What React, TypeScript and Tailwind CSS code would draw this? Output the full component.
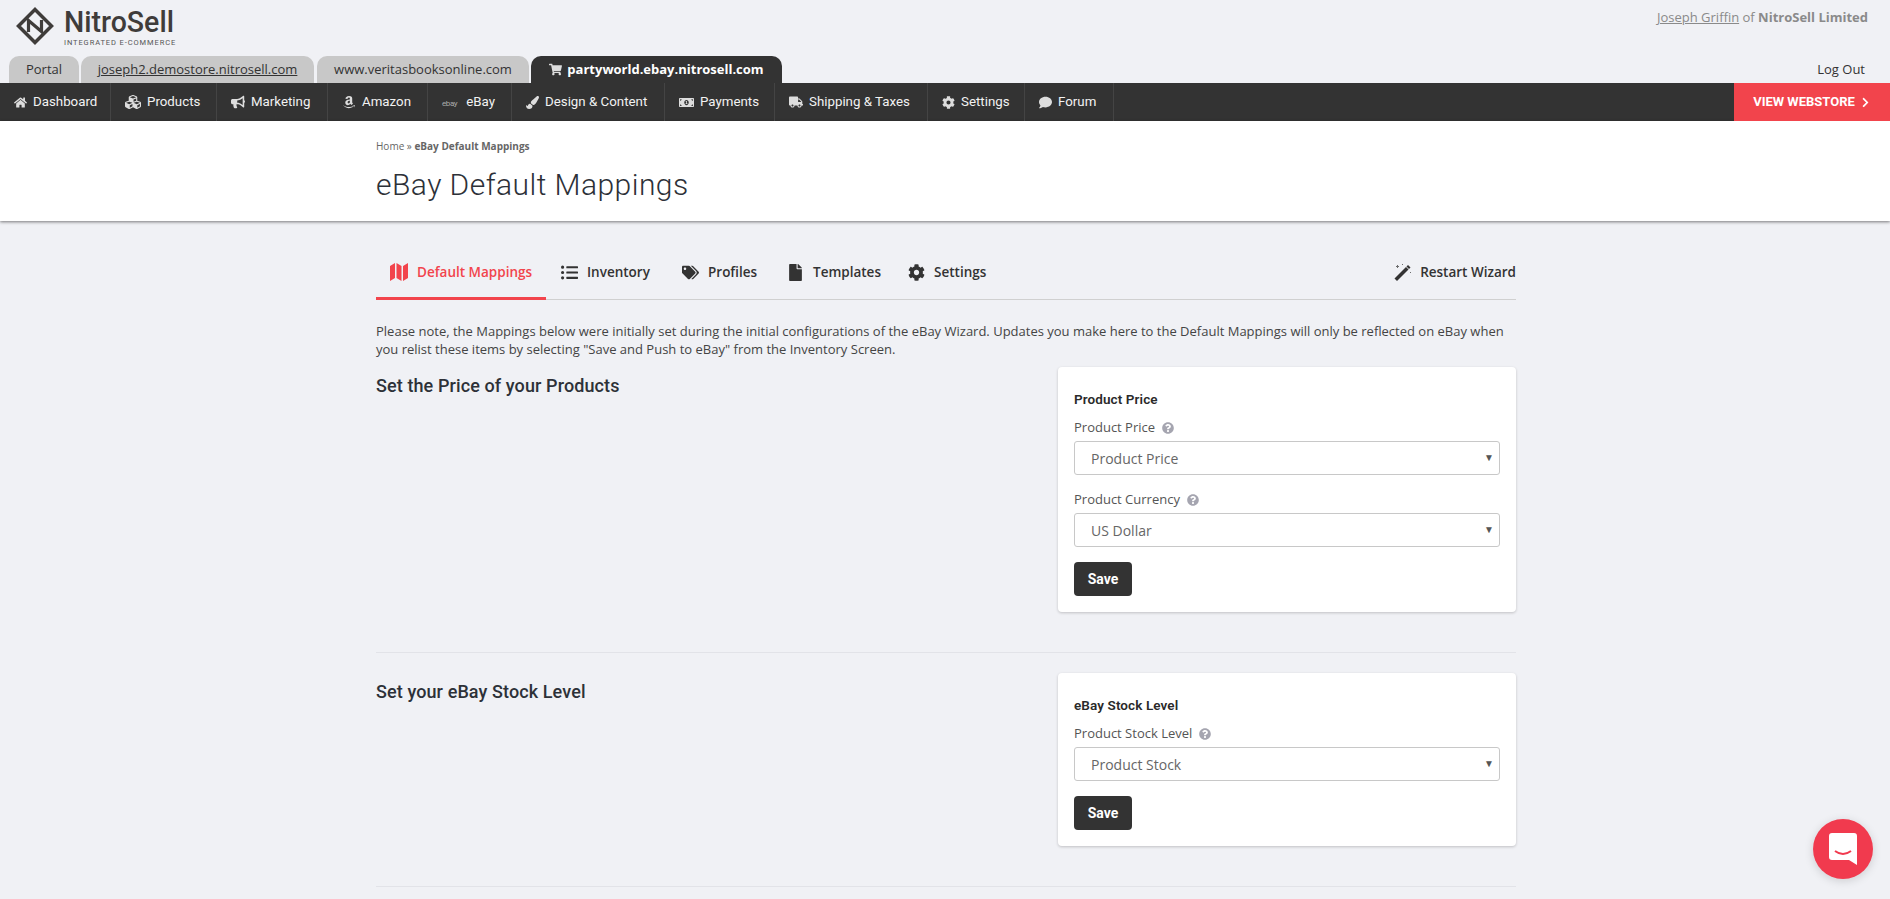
import { FunctionComponent, ReactNode } from "react";
import {
  FaAmazon,
  FaBullhorn,
  FaChevronRight,
  FaCog,
  FaComment,
  FaCubes,
  FaFile,
  FaHome,
  FaListUl,
  FaMoneyBillAlt,
  FaPaintBrush,
  FaQuestionCircle,
  FaShoppingCart,
  FaTags,
  FaTruck,
} from "react-icons/fa";

const heading = "font-['Roboto',sans-serif]";

const Logo: FunctionComponent = () => (
  <div className="flex items-start pl-4 pt-[7px]">
    <svg width="38" height="38" viewBox="0 0 38 38" fill="none" className="shrink-0">
      <path d="M19 2.5 L35.5 19 L19 35.5 L2.5 19 Z" stroke="#3f3c3a" strokeWidth="3.5" />
      <path d="M12.5 25 V13.5 L25.5 24.5 V13" stroke="#3f3c3a" strokeWidth="3.2" />
    </svg>
    <div className="ml-[10px] w-[110px]">
      <div className={`${heading} origin-left scale-x-[0.95] whitespace-nowrap text-[30px] leading-[30px] font-medium text-[#3f3c3a]`}>
        NitroSell
      </div>
      <div className={`${heading} mt-[1px] whitespace-nowrap text-[7.5px] leading-[9px] tracking-[0.9px] text-[#555]`}>
        INTEGRATED E-COMMERCE
      </div>
    </div>
  </div>
);

const SiteTabs: FunctionComponent = () => (
  <div className="flex h-[27px] items-end justify-between pl-[9px] pr-[25px]">
    <div className={`flex h-[27px] gap-[2px] font-['Open_Sans',sans-serif] text-[13px] leading-[27px] text-[#333]`}>
      <div className="w-[70px] rounded-t-[10px] bg-[#c8c8c8] text-center">Portal</div>
      <div className="w-[233px] rounded-t-[10px] bg-[#c8c8c8] text-center underline">joseph2.demostore.nitrosell.com</div>
      <div className="ml-px w-[212px] rounded-t-[10px] bg-[#c8c8c8] text-center">www.veritasbooksonline.com</div>
      <div className="flex w-[251px] items-center justify-center gap-[5px] rounded-t-[10px] bg-[#333] font-bold text-white">
        <FaShoppingCart className="text-[13px] text-[#ddd]" />
        partyworld.ebay.nitrosell.com
      </div>
    </div>
    <div className="font-['Open_Sans',sans-serif] text-[13px] leading-[27px] text-[#333]">Log Out</div>
  </div>
);

const navItems: { label: string; icon: ReactNode; width: string }[] = [
  { label: "Dashboard", icon: <FaHome className="text-[13px]" />, width: "w-[111px]" },
  { label: "Products", icon: <FaCubes className="text-[16px]" />, width: "w-[106px]" },
  { label: "Marketing", icon: <FaBullhorn className="text-[14px]" />, width: "w-[111px]" },
  { label: "Amazon", icon: <FaAmazon className="text-[14px]" />, width: "w-[100px]" },
  {
    label: "eBay",
    icon: <span className="mr-[3px] text-[8px] tracking-[-0.4px] text-[#aaa]">ebay</span>,
    width: "w-[84px]",
  },
  { label: "Design & Content", icon: <FaPaintBrush className="text-[13px]" />, width: "w-[153px]" },
  { label: "Payments", icon: <FaMoneyBillAlt className="text-[15px]" />, width: "w-[110px]" },
  { label: "Shipping & Taxes", icon: <FaTruck className="text-[14px]" />, width: "w-[153px]" },
  { label: "Settings", icon: <FaCog className="text-[13px]" />, width: "w-[97px]" },
  { label: "Forum", icon: <FaComment className="text-[13px]" />, width: "w-[89px]" },
];

const NavBar: FunctionComponent = () => (
  <nav className="flex h-[38px] items-stretch justify-between bg-[#333] text-white">
    <div className="flex">
      {navItems.map((item) => (
        <a
          key={item.label}
          className={`${item.width} ${heading} flex items-center gap-[6px] border-r border-[#444] pl-[14px] text-[13.3px] text-[#f2f2f2]`}
        >
          <span className="text-[#ddd]">{item.icon}</span>
          {item.label}
        </a>
      ))}
    </div>
    <a className={`${heading} flex w-[156px] items-center justify-center gap-[5px] bg-[#f2444c] text-[13px] font-bold text-white`}>
      VIEW WEBSTORE
      <FaChevronRight className="text-[11px]" />
    </a>
  </nav>
);

const MapIcon: FunctionComponent = () => (
  <svg width="18" height="18" viewBox="0 0 18 18" fill="currentColor">
    <path d="M0 3 L5 0 V15 L0 18 Z M6.5 0 L11.5 3 V18 L6.5 15 Z M13 3 L18 0 V15 L13 18 Z" />
  </svg>
);

const WandIcon: FunctionComponent = () => (
  <svg width="17" height="17" viewBox="0 0 17 17" fill="currentColor">
    <path d="M0.5 14.5 L12 3 L14.5 5.5 L3 17 Z" />
    <path d="M12.5 2.5 L14 1 L16.5 3.5 L15 5 Z" />
    <path d="M3 1 h1 v1 h1 v1 h-1 v1 h-1 v-1 h-1 v-1 h1 Z M8 0 h1 v1 h-1 Z M16 8 h1 v1 h-1 Z" opacity="0.7" />
  </svg>
);

const pageTabs = [
  { label: "Default Mappings", icon: <MapIcon />, active: true, width: "w-[170px]" },
  { label: "Inventory", icon: <FaListUl />, active: false, width: "w-[121px]" },
  { label: "Profiles", icon: <FaTags />, active: false, width: "w-[105px]" },
  { label: "Templates", icon: <FaFile />, active: false, width: "w-[121px]" },
  { label: "Settings", icon: <FaCog />, active: false, width: "w-[110px]" },
];

const PageTabs: FunctionComponent = () => (
  <div className="flex h-[48px] items-stretch justify-between border-b border-[#d0d0d0]">
    <div className="flex">
      {pageTabs.map((tab) => (
        <div
          key={tab.label}
          className={`${tab.width} flex h-[48px] items-center gap-[9px] border-b-[3px] pb-[5px] pl-[14px] font-['Open_Sans',sans-serif] text-[13.5px] font-semibold ${
            tab.active
              ? "border-[#f2444c] text-[#f2444c]"
              : "border-transparent text-[#333]"
          }`}
        >
          <span className="flex w-[18px] justify-center text-[17px]">{tab.icon}</span>
          {tab.label}
        </div>
      ))}
    </div>
    <div className="flex items-center gap-[9px] pb-[6px] font-['Open_Sans',sans-serif] text-[13.5px] font-semibold text-[#333]">
      <WandIcon />
      Restart Wizard
    </div>
  </div>
);

interface FieldProps {
  label: string;
  value: string;
}

const Field: FunctionComponent<FieldProps> = ({ label, value }) => (
  <div className="mb-[16px]">
    <div className="mb-[4px] flex h-[18px] items-center gap-[7px] text-[13px] text-[#555]">
      {label}
      <FaQuestionCircle className="text-[12px] text-[#a5a5b0]" />
    </div>
    <div className="relative h-[34px] rounded-[3px] border border-[#c8c8c8] bg-white pl-[16px] text-[14px] leading-[33px] text-[#666]">
      {value}
      <span className="absolute right-[5px] top-[-1px] text-[10px] text-[#555]">▼</span>
    </div>
  </div>
);

interface SectionProps {
  title: string;
  cardTitle: string;
  fields: FieldProps[];
}

const Section: FunctionComponent<SectionProps> = ({ title, cardTitle, fields }) => (
  <section className="flex items-start justify-between">
    <h2 className={`${heading} pt-[7px] text-[18px] leading-[24px] font-medium tracking-[0.1px] text-[#2d3138]`}>{title}</h2>
    <div className="w-[458px] rounded-[4px] bg-white px-4 pt-[23px] pb-4 shadow-[0_1px_3px_rgba(0,0,0,0.2)]">
      <h3 className={`${heading} mb-[11px] text-[13.5px] leading-[18px] font-semibold tracking-[0.1px] text-[#2a2a2a]`}>{cardTitle}</h3>
      {fields.map((field) => (
        <Field key={field.label} {...field} />
      ))}
      <button className={`${heading} -mt-px block h-[34px] w-[58px] rounded-[4px] bg-[#333] text-[14px] font-bold text-white`}>
        Save
      </button>
    </div>
  </section>
);

const App: FunctionComponent = () => {
  return (
    <div className="relative h-[899px] overflow-hidden bg-[#f0f1f5] font-['Open_Sans',sans-serif]">
      <header className="relative h-[83px]">
        <div className="absolute right-[22px] top-[8px] text-[13px] text-[#8a8a8a]">
          <span className="underline">Joseph Griffin</span> of <span className="font-bold">NitroSell Limited</span>
        </div>
        <div className="h-[56px]">
          <Logo />
        </div>
        <SiteTabs />
      </header>
      <NavBar />
      <div className="h-[100px] bg-white pl-[376px] pt-[18px] shadow-[0_1px_3px_rgba(0,0,0,0.5)]">
        <div className="text-[10px] leading-[14px] text-[#666]">
          Home » <span className="font-bold">eBay Default Mappings</span>
        </div>
        <h1 className={`${heading} mt-[12px] text-[30px] leading-[40px] font-light tracking-[0.45px] text-[#2d3138]`}>
          eBay Default Mappings
        </h1>
      </div>
      <main className="ml-[376px] mt-[31px] w-[1140px]">
        <PageTabs />
        <p className="mt-[22px] text-[13px] leading-[18px] text-[#444]">
          Please note, the Mappings below were initially set during the initial configurations of the eBay Wizard. Updates you make here to the Default Mappings will only be reflected on eBay when
          <br />
          you relist these items by selecting "Save and Push to eBay" from the Inventory Screen.
        </p>
        <div className="mt-[9px]">
          <Section
            title="Set the Price of your Products"
            cardTitle="Product Price"
            fields={[
              { label: "Product Price", value: "Product Price" },
              { label: "Product Currency", value: "US Dollar" },
            ]}
          />
        </div>
        <hr className="mt-[40px] mb-[20px] border-[#e2e3e8]" />
        <Section
          title="Set your eBay Stock Level"
          cardTitle="eBay Stock Level"
          fields={[{ label: "Product Stock Level", value: "Product Stock" }]}
        />
        <hr className="mt-[40px] border-[#e2e3e8]" />
      </main>
      <div className="fixed bottom-[20px] right-[17px] flex h-[60px] w-[60px] items-center justify-center rounded-full bg-[#f13a4e] shadow-[0_2px_10px_rgba(0,0,0,0.15)]">
        <svg width="28" height="32" viewBox="0 0 28 32">
          <path d="M3 0 H25 A3 3 0 0 1 28 3 V32 L20 27 H3 A3 3 0 0 1 0 24 V3 A3 3 0 0 1 3 0 Z" fill="#fff" />
          <path d="M6 18 Q14 24 22 18" stroke="#f13a4e" strokeWidth="2" fill="none" />
        </svg>
      </div>
    </div>
  );
};

export default App;
